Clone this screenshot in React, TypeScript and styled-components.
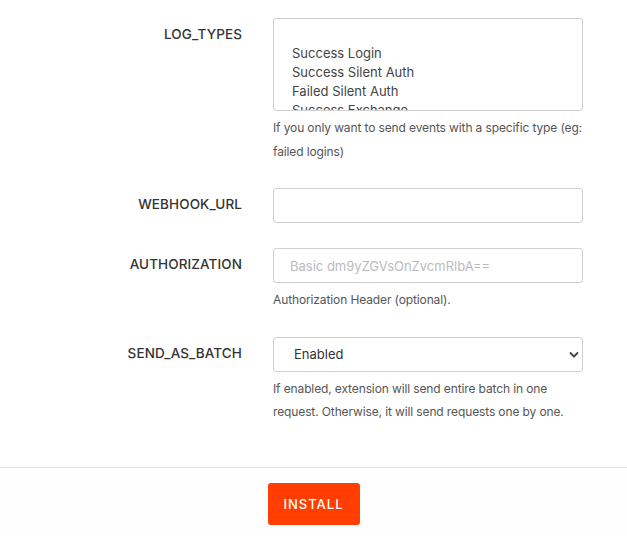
import React from "react";
import styled, { createGlobalStyle } from "styled-components";

const Global = createGlobalStyle`
  html, body { margin: 0; padding: 0; background: #ffffff; }
  body { font-family: Inter, "Helvetica Neue", Arial, sans-serif; -webkit-font-smoothing: antialiased; }
  * { box-sizing: border-box; }
`;

const Page = styled.div`
  width: 627px;
  height: 536px;
  display: flex;
  flex-direction: column;
  overflow: hidden;
`;

const Form = styled.div`
  padding: 18px 44px 0 0;
  display: flex;
  flex-direction: column;
  height: 467px;
`;

const Row = styled.div`
  display: grid;
  grid-template-columns: 242px 310px;
  column-gap: 31px;
  margin-bottom: 25px;
`;

const Label = styled.label`
  text-align: right;
  font-size: 13.5px;
  line-height: 33px;
  color: #333;
  font-weight: 500;
  letter-spacing: 0.1px;
`;

const Control = styled.div`
  display: flex;
  flex-direction: column;
`;

const ListBox = styled.div`
  height: 93px;
  border: 1px solid #d0d0d0;
  border-radius: 3px;
  padding-top: 6px;
  overflow: hidden;
  background: #fff;
`;

const Option = styled.div`
  height: 19px;
  line-height: 19px;
  padding-left: 18px;
  font-size: 13px;
  color: #444;
`;

const Input = styled.input`
  height: 35px;
  width: 100%;
  border: 1px solid #d0d0d0;
  border-radius: 3px;
  padding: 0 16px;
  font-family: inherit;
  font-size: 13px;
  color: #333;
  outline: none;
  &::placeholder { color: #bbb; }
`;

const SelectWrap = styled.div`
  position: relative;
  height: 35px;
`;

const Select = styled.select`
  appearance: none;
  -webkit-appearance: none;
  height: 35px;
  width: 100%;
  border: 1px solid #d0d0d0;
  border-radius: 3px;
  padding: 0 30px 0 20px;
  background: #fff;
  font-family: inherit;
  font-size: 13px;
  color: #333;
  outline: none;
`;

const Chevron = styled.svg`
  position: absolute;
  right: 4px;
  top: 14px;
  pointer-events: none;
`;

const Help = styled.p`
  margin: 5px 0 0;
  font-size: 12px;
  line-height: 23.5px;
  letter-spacing: -0.12px;
  color: #555;
`;

const Footer = styled.div`
  flex: 1;
  border-top: 1px solid #e2e2e2;
  background: #fefefe;
  display: flex;
  justify-content: center;
  padding-top: 15px;
`;

const InstallButton = styled.button`
  width: 92px;
  height: 42px;
  border: none;
  border-radius: 3px;
  background: #ff3e00;
  color: #fff;
  font-family: inherit;
  font-size: 13px;
  font-weight: 500;
  letter-spacing: 1px;
  cursor: pointer;
`;

const logTypes = ["", "Success Login", "Success Silent Auth", "Failed Silent Auth", "Success Exchange"];

export default function App() {
  return (
    <Page>
      <Global />
      <Form>
        <Row>
          <Label>LOG_TYPES</Label>
          <Control>
            <ListBox role="listbox" aria-multiselectable="true">
              {logTypes.map((t, i) => (
                <Option key={i} role="option">{t || "\u00a0"}</Option>
              ))}
            </ListBox>
            <Help>If you only want to send events with a specific type (eg: failed logins)</Help>
          </Control>
        </Row>
        <Row>
          <Label>WEBHOOK_URL</Label>
          <Control>
            <Input type="text" />
          </Control>
        </Row>
        <Row>
          <Label>AUTHORIZATION</Label>
          <Control>
            <Input type="text" placeholder="Basic dm9yZGVsOnZvcmRlbA==" />
            <Help>Authorization Header (optional).</Help>
          </Control>
        </Row>
        <Row>
          <Label>SEND_AS_BATCH</Label>
          <Control>
            <SelectWrap>
              <Select defaultValue="enabled">
                <option value="enabled">Enabled</option>
                <option value="disabled">Disabled</option>
              </Select>
              <Chevron width="10" height="8" viewBox="0 0 10 8">
                <path d="M1.5 2 L5 5.5 L8.5 2" fill="none" stroke="#444" strokeWidth="1.8" strokeLinecap="round" strokeLinejoin="round" />
              </Chevron>
            </SelectWrap>
            <Help>If enabled, extension will send entire batch in one request. Otherwise, it will send requests one by one.</Help>
          </Control>
        </Row>
      </Form>
      <Footer>
        <InstallButton>INSTALL</InstallButton>
      </Footer>
    </Page>
  );
}
